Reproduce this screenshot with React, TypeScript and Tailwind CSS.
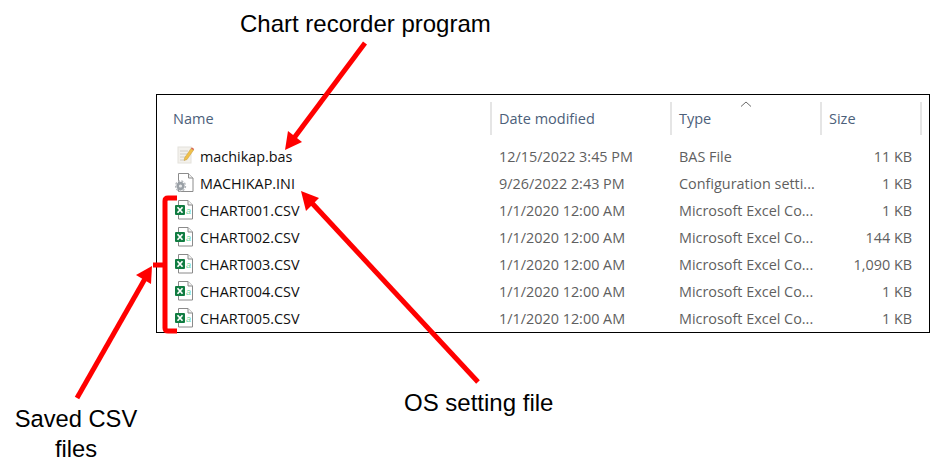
const rows = [
  { icon: "bas", name: "machikap.bas", date: "12/15/2022 3:45 PM", type: "BAS File", size: "11 KB" },
  { icon: "ini", name: "MACHIKAP.INI", date: "9/26/2022 2:43 PM", type: "Configuration setti...", size: "1 KB" },
  { icon: "csv", name: "CHART001.CSV", date: "1/1/2020 12:00 AM", type: "Microsoft Excel Co...", size: "1 KB" },
  { icon: "csv", name: "CHART002.CSV", date: "1/1/2020 12:00 AM", type: "Microsoft Excel Co...", size: "144 KB" },
  { icon: "csv", name: "CHART003.CSV", date: "1/1/2020 12:00 AM", type: "Microsoft Excel Co...", size: "1,090 KB" },
  { icon: "csv", name: "CHART004.CSV", date: "1/1/2020 12:00 AM", type: "Microsoft Excel Co...", size: "1 KB" },
  { icon: "csv", name: "CHART005.CSV", date: "1/1/2020 12:00 AM", type: "Microsoft Excel Co...", size: "1 KB" },
];

function FileIcon({ kind }: { kind: string }) {
  if (kind === "bas")
    return (
      <svg width="20" height="20" viewBox="0 0 20 20">
        <rect x="3" y="1" width="13" height="16" fill="#f3f1ec" stroke="#e4e2dc" />
        <path d="M5 5h8M5 8h7M5 11h6M5 14h5" stroke="#cfccc4" strokeWidth="1" />
        <path d="M9.500 12 16 2.500l2.500 1.700L12 13.500l-2.800 1z" fill="#f0c04a" stroke="#c29a3c" strokeWidth="0.500" />
        <path d="M16 2.500l.8-1.200 2.400 1.700-.7 1.200z" fill="#d9694f" />
      </svg>
    );
  if (kind === "ini")
    return (
      <svg width="20" height="20" viewBox="0 0 20 20">
        <path d="M3.500 0.500h10l4.500 4.500v13.500h-14.500z" fill="#fff" stroke="#8c8c8c" />
        <path d="M13.500 0.500v4.500h4.500" fill="#eee" stroke="#8c8c8c" />
        <circle cx="5.500" cy="13" r="4.200" fill="#9aa0a6" />
        <circle cx="5.500" cy="13" r="5" fill="none" stroke="#b4b8bc" strokeWidth="1.400" strokeDasharray="2 1.400" />
        <circle cx="5.500" cy="13" r="1.600" fill="#e6e8ea" />
      </svg>
    );
  return (
    <svg width="20" height="20" viewBox="0 0 20 20">
      <path d="M3.500 0.500h9.500l4.500 4.500v14h-14z" fill="#fff" stroke="#8a8a8a" />
      <path d="M13 0.500v4.500h4.500" fill="#f2f2f2" stroke="#8a8a8a" />
      <rect x="0" y="5" width="10" height="10" rx="1" fill="#107c41" />
      <path d="M2.500 7.200 7.500 12.800M7.500 7.200 2.500 12.800" stroke="#fff" strokeWidth="1.700" />
      <text x="11" y="14" fontSize="9" fontStyle="italic" fill="#5fd49f" fontFamily="'Liberation Sans', sans-serif">a</text>
    </svg>
  );
}

function Head({ label, className }: { label: string; className: string }) {
  return (
    <div className={`flex h-[33px] items-center border-r-2 border-[#e5e5e5] text-[14.5px] text-[#4c607a] ${className}`}>
      {label}
    </div>
  );
}

export default function App() {
  return (
    <div className="relative h-[476px] w-[930px] overflow-hidden bg-white font-['Liberation_Sans',sans-serif] text-black">
      <p className="pt-[10px] pl-[240px] text-[24px] leading-[28px]">Chart recorder program</p>

      <div className="mt-[56px] ml-[156px] h-[239px] w-[774px] border border-black font-['Open_Sans',sans-serif]">
        <div className="relative flex pt-[7px] pl-[16px]">
          <Head label="Name" className="w-[319px]" />
          <Head label="Date modified" className="w-[180px] pl-[7px]" />
          <Head label="Type" className="w-[150px] pl-[7px]" />
          <Head label="Size" className="w-[100px] pl-[7px]" />
          <svg className="absolute top-[6px] left-[583px]" width="12" height="6" viewBox="0 0 12 6">
            <path d="M1 5.500 6 1l5 4.500" fill="none" stroke="#6b6b6b" />
          </svg>
        </div>
        <div className="mt-[8px] flex flex-col text-[14.4px]">
          {rows.map((r) => (
            <div key={r.name} className="flex h-[27px] items-center">
              <div className="flex w-[342px] items-center pl-[18px]">
                <FileIcon kind={r.icon} />
                <span className="ml-[5px] text-[#101010]">{r.name}</span>
              </div>
              <span className="w-[180px] text-[#5f5f5f]">{r.date}</span>
              <span className="w-[150px] text-[#5f5f5f]">{r.type}</span>
              <span className="w-[83px] text-right text-[#5f5f5f]">{r.size}</span>
            </div>
          ))}
        </div>
      </div>

      <p className="absolute top-[389px] left-[404px] text-[24px] leading-[28px]">OS setting file</p>
      <p className="absolute top-[404px] left-[6px] w-[140px] text-center text-[23.7px] leading-[30px]">
        Saved CSV
        <br />
        files
      </p>

      <svg className="pointer-events-none absolute inset-0" width="930" height="476" viewBox="0 0 930 476">
        <g stroke="#ff0000" strokeWidth="5" fill="none">
          <path d="M365 43 294 138" />
          <path d="M478 382 311 202" />
          <path d="M77 398 146 277" />
          <path d="M177 198H168Q165 198 165 201V328Q165 331 168 331H177" />
          <path d="M153 265H165" />
        </g>
        <g fill="#ff0000">
          <path d="M285 150 288 131 302 142z" />
          <path d="M301 191 319 198 306 211z" />
          <path d="M152 266 151 284 136 275z" />
        </g>
      </svg>
    </div>
  );
}
